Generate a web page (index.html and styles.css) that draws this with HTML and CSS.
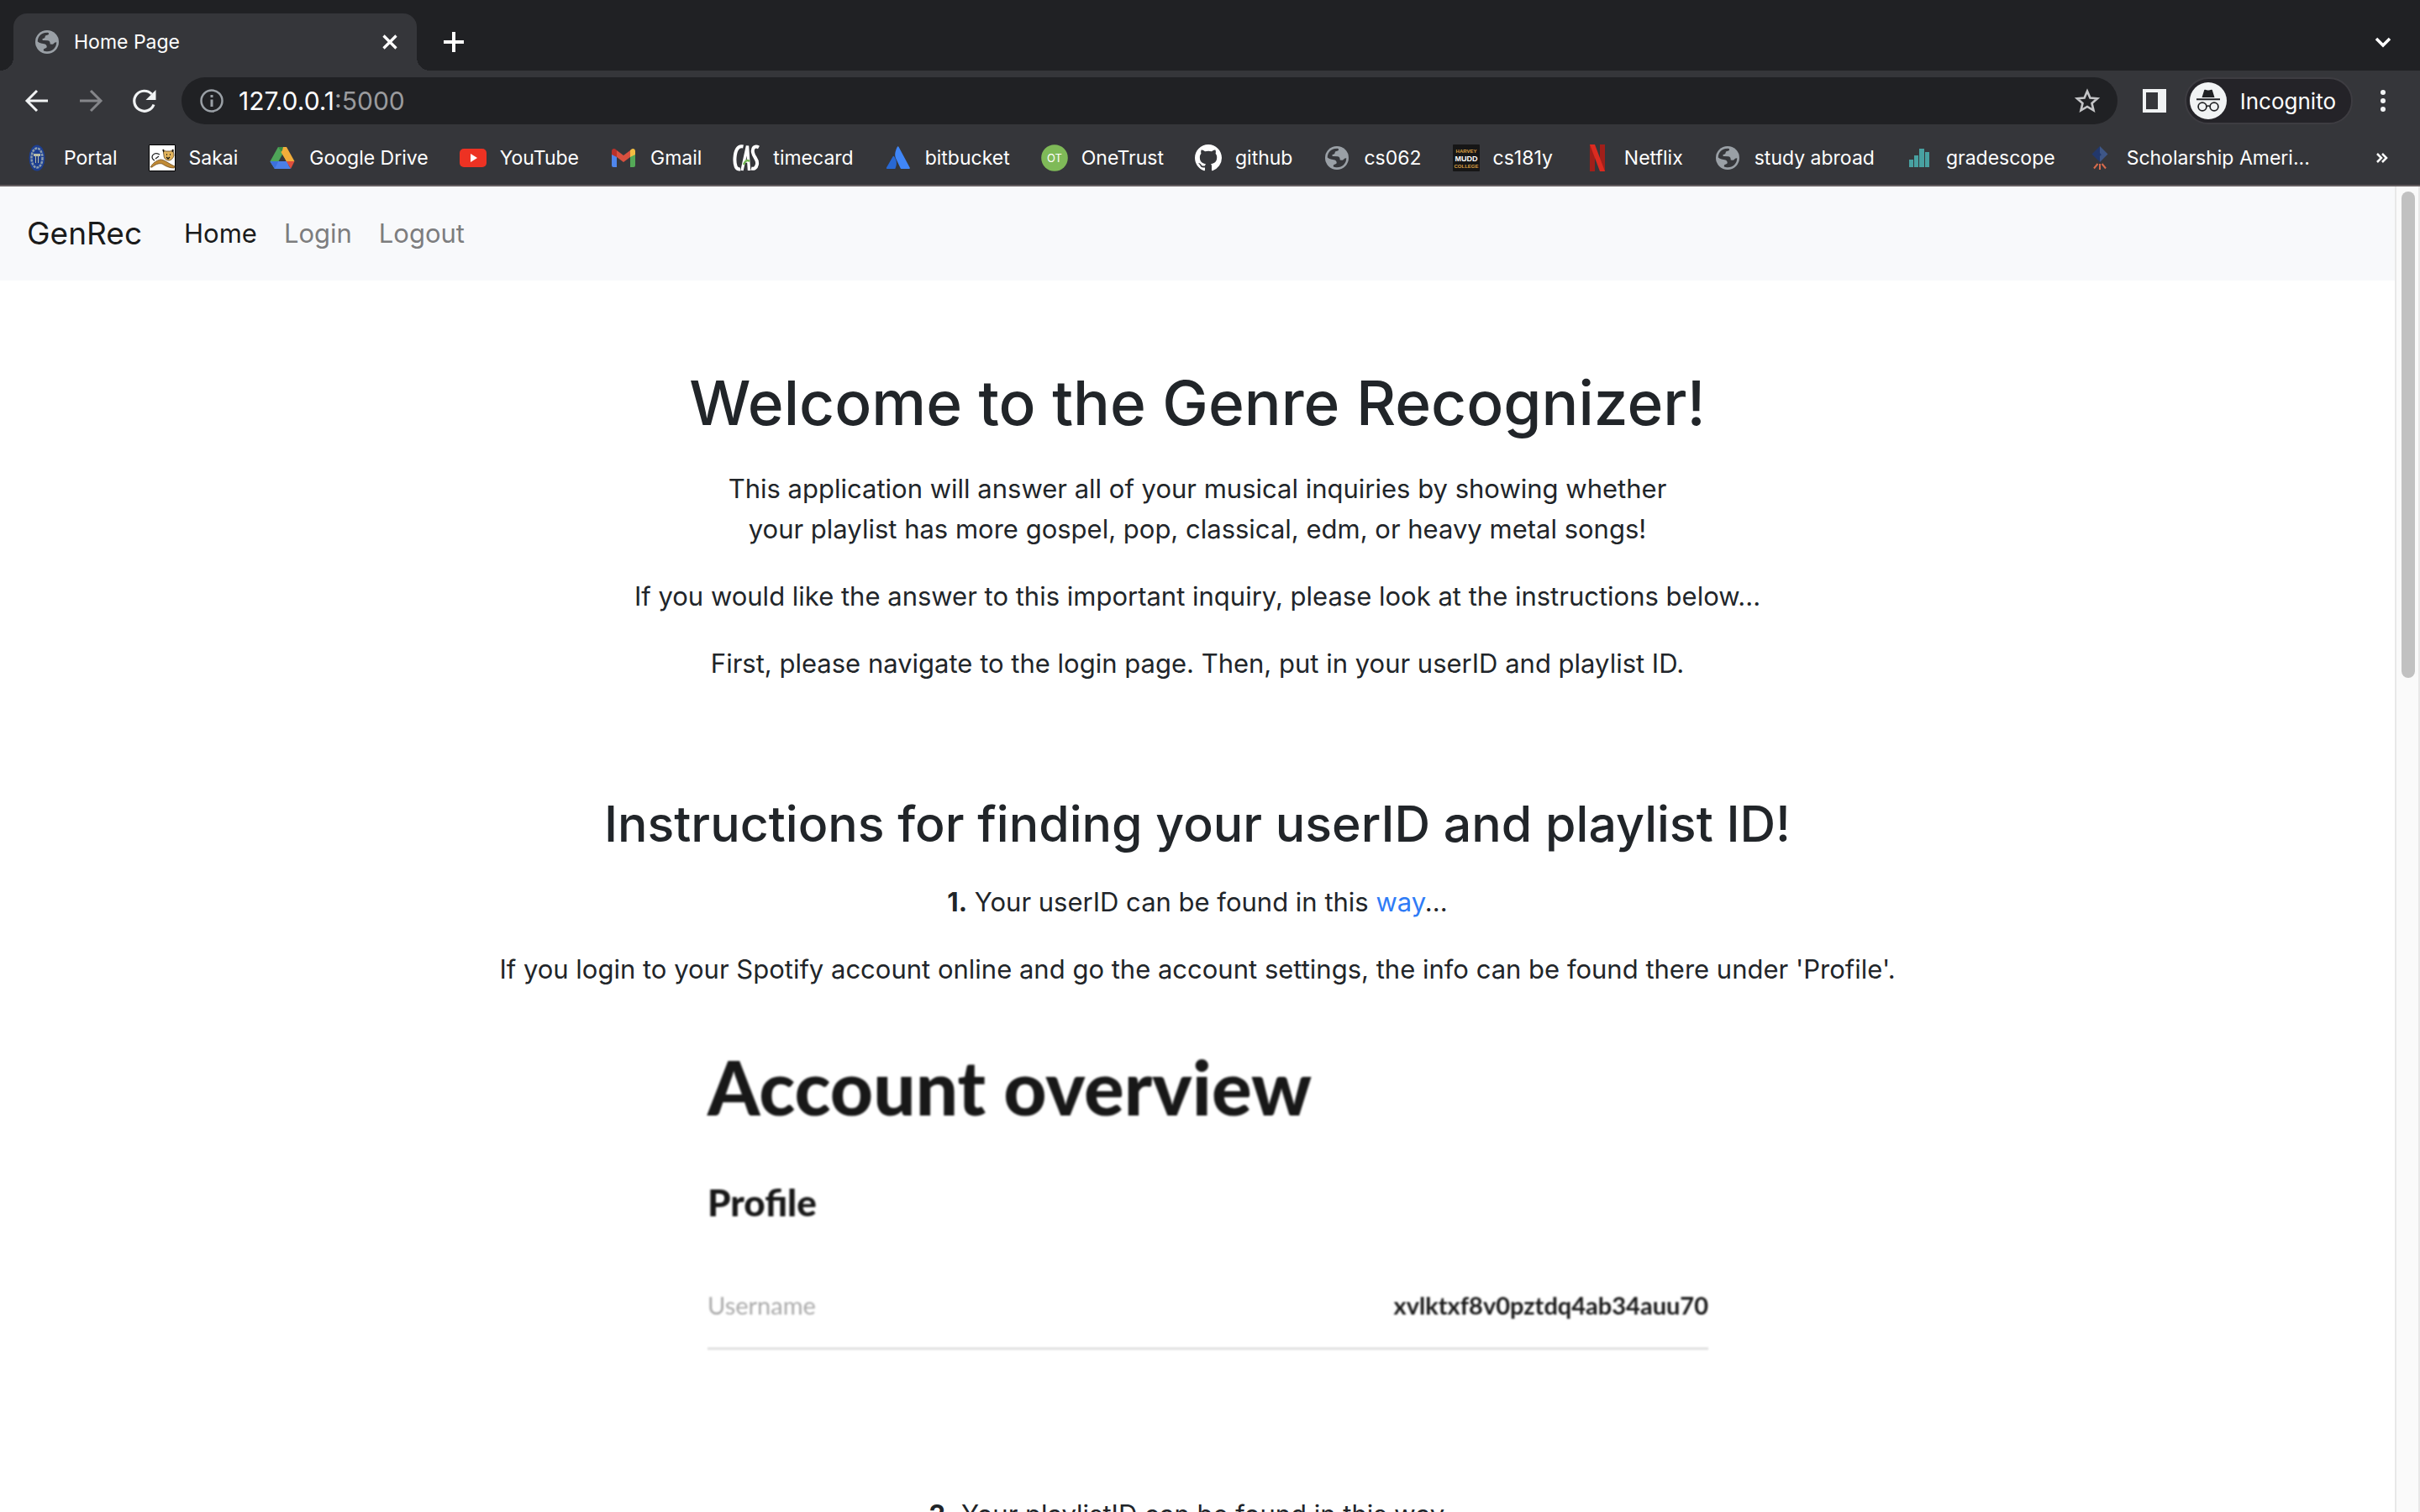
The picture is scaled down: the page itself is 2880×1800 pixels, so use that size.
FILE: index.html
```html
<!DOCTYPE html>
<html lang="en">
<head>
<meta charset="utf-8">
<title>Home Page</title>
<link rel="stylesheet" href="styles.css">
</head>
<body>
<svg width="0" height="0" class="defs" aria-hidden="true">
  <symbol id="globe" viewBox="0 0 32 32">
    <circle cx="16" cy="16" r="14" fill="#9aa0a6"/>
    <path fill="#35363a" d="M4.800 15.500C4.700 10 8.500 5.600 13.500 4.900L16.800 4.700C18.600 4.900 18.400 7 17 7.600L14.500 8.300C13.300 8.800 14 10.500 13 11.200L10.600 12.200C9.800 13.200 10.800 14 12 14.100L17 14.300C19.300 14.500 19.800 16.500 19.700 18.400L22.200 18.800C24 18.800 24.200 16.800 25.600 16.400L27.300 16.200C27.200 22.500 22.500 27.200 16.200 27.300C14.600 27.300 13 27 11.900 26.500L11.800 25C12 23.600 14.500 23.900 15.400 22.800C16.300 21.500 15.400 19.300 13.500 18.600C10.500 17.800 7 17.800 4.800 15.500Z"/>
  </symbol>
</svg>

<header class="browser">
  <div class="tabstrip">
    <div class="tab">
      <svg class="icon" aria-hidden="true"><use href="#globe"/></svg>
      <span class="tab-title">Home Page</span>
      <button class="icon-button" aria-label="Close tab"><svg class="icon" viewBox="0 0 32 32"><path d="M8.500 8.500l15 15M23.500 8.500l-15 15" stroke="#fff" stroke-width="3.200" fill="none"/></svg></button>
    </div>
    <button class="icon-button new-tab" aria-label="New tab"><svg class="icon" viewBox="0 0 32 32"><path d="M16 4v24M4 16h24" stroke="#fff" stroke-width="4" fill="none"/></svg></button>
    <button class="icon-button tab-search" aria-label="Search tabs"><svg class="icon" viewBox="0 0 32 32"><path d="M8 12l8 8 8-8" stroke="#fff" stroke-width="3.500" fill="none"/></svg></button>
  </div>

  <div class="toolbar">
    <button class="icon-button" aria-label="Back"><svg class="icon" viewBox="0 0 32 32"><path d="M29 16H5M16 4L4 16l12 12" stroke="#f1f3f4" stroke-width="3" fill="none"/></svg></button>
    <button class="icon-button" aria-label="Forward" disabled><svg class="icon" viewBox="0 0 32 32"><path d="M3 16h24M16 4l12 12-12 12" stroke="#85868a" stroke-width="3" fill="none"/></svg></button>
    <button class="icon-button" aria-label="Reload"><svg class="icon" viewBox="0 0 32 32"><path d="M27 20.500A12 12 0 1 1 24.500 8" stroke="#f1f3f4" stroke-width="3.200" fill="none"/><path d="M29.500 3v12h-12z" fill="#f1f3f4"/></svg></button>
    <div class="omnibox">
      <svg class="icon" viewBox="0 0 32 32" aria-hidden="true"><circle cx="16" cy="16" r="12.500" fill="none" stroke="#9aa0a6" stroke-width="2.500"/><path d="M16 14.500v8.500M16 9v3" stroke="#9aa0a6" stroke-width="3"/></svg>
      <span class="address">127.0.0.1<span class="port">:5000</span></span>
      <button class="icon-button" aria-label="Bookmark this tab"><svg class="icon" viewBox="0 0 32 32"><path d="M16 4.500l3.400 8 8.600.7-6.500 5.700 2 8.500L16 22.900l-7.500 4.500 2-8.500L4 13.200l8.600-.7z" stroke="#c4c5c7" stroke-width="2.600" fill="none"/></svg></button>
    </div>
    <button class="icon-button" aria-label="Side panel"><svg class="icon" viewBox="0 0 32 32"><path fill="#f1f3f4" fill-rule="evenodd" d="M2 2h28v28H2zM6 6v20h14V6z"/></svg></button>
    <button class="incognito">
      <svg class="avatar" viewBox="0 0 44 44" aria-hidden="true"><circle cx="22" cy="22" r="22" fill="#f1f3f4"/><path fill="#202124" d="M17.300 9c1.700-.8 3 .6 4.700.6S25 8.200 26.700 9L29.500 18h-15zM8 19.300h28v1.900H8z"/><g fill="none" stroke="#202124" stroke-width="1.700"><circle cx="15" cy="29" r="4.900"/><circle cx="29" cy="29" r="4.900"/><path d="M20 28.500q2-1 4 0"/></g></svg>
      <span>Incognito</span>
    </button>
    <button class="icon-button menu" aria-label="Menu"><svg class="icon" viewBox="0 0 32 32"><g fill="#f1f3f4"><circle cx="16" cy="6" r="3"/><circle cx="16" cy="16" r="3"/><circle cx="16" cy="26" r="3"/></g></svg></button>
  </div>

  <nav class="bookmarks" aria-label="Bookmarks">
    <a href="#"><svg class="icon" viewBox="0 0 32 32"><ellipse cx="16" cy="16" rx="9.500" ry="15.500" fill="#1d3f91"/><ellipse cx="16" cy="16" rx="6.500" ry="11.500" fill="none" stroke="#8b9cab" stroke-width="2.500" stroke-dasharray="3 1"/><path d="M12 11h8v3h-2v8h-4v-8h-2z" fill="#b9bea9"/><path d="M15 14h2v8h-2z" fill="#15327c"/></svg>Portal</a>
    <a href="#"><svg class="icon" viewBox="0 0 32 32"><path d="M.5.5h31v31H.5z" fill="#fff" stroke="#000"/><path d="M2 27c3-5 7-8 12-9 5 0 8 4 17 8l-1 2c-5 0-10-2-14-5-5-1-8 1-12 4z" fill="#c08a35" stroke="#6d4b1d" stroke-width=".8"/><path d="M17 6l3 2h6l3-2 1 7c-1 4-4 6-6 6-4 0-6-3-6-6z" fill="#e3b45b" stroke="#5a421f" stroke-width=".8"/><path d="M17 6l1 3M29 6l-1 3M21 12h1M25 12h1M21 15l2 2 2-2" stroke="#111" stroke-width="1.300" fill="none"/><path d="M7 19c-4-2-4-6 0-8 2-1 4 0 6 1M8 17l4-3" stroke="#222" stroke-width="1.200" fill="none"/></svg>Sakai</a>
    <a href="#"><svg class="icon" viewBox="0 0 32 32"><path fill="#4ea558" d="M11 3h5.500l4 8L7 29 1.500 20z"/><path fill="#388b45" d="M11 3h10l-4.600 8z"/><path fill="#f2ad3a" d="M21 3l9.500 17h-10L14.500 9 16 7 17 3z"/><path fill="#4b80e8" d="M7 20h18l-5 9H7l-5.500-8.500z"/><path fill="#dd4f3e" d="M20.500 20h10L26 29z"/><path fill="#35363a" d="M16 12l4.500 8h-9z"/><path fill="#3c70db" d="M1.500 20h10L7 29z"/><path fill="#4b80e8" d="M11.500 20h9L26 29H7z"/></svg>Google Drive</a>
    <a href="#"><svg class="icon" viewBox="0 0 32 32"><rect y="5" width="32" height="22" rx="5" fill="#ed3223"/><path d="M13 11l8 5-8 5z" fill="#fff"/></svg>YouTube</a>
    <a href="#"><svg class="icon" viewBox="0 0 32 32"><path fill="#4f86ec" d="M2 10l6 4v13H4a2 2 0 0 1-2-2z"/><path fill="#54a957" d="M24 14l6-4v15a2 2 0 0 1-2 2h-4z"/><path fill="#d8503f" d="M8 7l8 6 8-6v8l-8 6-8-6z"/><path fill="#b8312b" d="M2 12V8c0-3 3-4 5-2l1 1v8z"/><path fill="#f2bd42" d="M30 12V8c0-3-3-4-5-2l-1 1v8z"/></svg>Gmail</a>
    <a href="#"><svg class="icon" viewBox="0 0 32 32"><g fill="none" stroke="#fff" stroke-width="4"><path d="M12.500 2.500C6 1 3 7 2.500 16S4 30 9 29.500"/><path d="M11 31L17.500 1.500 19.500 31M13 20h7" stroke-width="3.400"/><path d="M31 3.500c-5-3-8 1-7 6 1 6 6 8 5 14-1 5-4 6-7 5"/></g><path d="M13 24c2-5 4-6 7-4" stroke="#71b552" stroke-width="2.500" fill="none"/></svg>timecard</a>
    <a href="#"><svg class="icon" viewBox="0 0 32 32"><path fill="#2868d3" d="M9.500 14.500c.5-1 1.400-1 1.800 0 3 4.500 3.500 9 1 14.500H3c-1 0-1.400-.6-1-1.500z"/><path fill="#4086f7" d="M14.800 3c.4-1 1.400-1 1.800 0L29.700 27.500c.4.900 0 1.500-1 1.500H20c-.8 0-1.200-.4-1.500-1L13.300 17c-2-4.500-1-9 1.500-14z"/></svg>bitbucket</a>
    <a href="#"><svg class="icon" viewBox="0 0 32 32"><circle cx="16" cy="16" r="15.800" fill="#7fba58"/><text x="16" y="21" text-anchor="middle" class="ot-text">OT</text></svg>OneTrust</a>
    <a href="#"><svg class="icon" viewBox="0 0 16 16"><path fill="#fff" d="M8 0C3.580 0 0 3.580 0 8c0 3.540 2.290 6.530 5.470 7.590.4.070.55-.17.55-.38 0-.19-.01-.82-.01-1.490-2.010.37-2.530-.49-2.690-.94-.09-.23-.48-.94-.82-1.130-.28-.15-.68-.52-.01-.53.63-.01 1.080.58 1.230.82.72 1.210 1.870.87 2.330.66.070-.52.28-.87.51-1.070-1.780-.2-3.640-.89-3.640-3.950 0-.87.31-1.590.82-2.150-.08-.2-.36-1.020.08-2.120 0 0 .67-.21 2.200.82.64-.18 1.320-.27 2-.27s1.360.09 2 .27c1.530-1.040 2.200-.82 2.200-.82.44 1.100.16 1.920.08 2.120.51.56.82 1.270.82 2.150 0 3.070-1.870 3.750-3.650 3.950.29.25.54.73.54 1.480 0 1.070-.01 1.930-.01 2.200 0 .21.15.46.55.38A8.010 8.010 0 0 0 16 8c0-4.420-3.580-8-8-8z"/></svg>github</a>
    <a href="#"><svg class="icon" aria-hidden="true"><use href="#globe"/></svg>cs062</a>
    <a href="#"><svg class="icon" viewBox="0 0 32 32"><rect width="32" height="32" rx="1" fill="#161616"/><g text-anchor="middle"><text x="16" y="10" fill="#dda043" class="hmc-small">HARVEY</text><text x="16" y="20" fill="#fff" class="hmc-large">MUDD</text><text x="16" y="28" fill="#dda043" class="hmc-small">COLLEGE</text></g></svg>cs181y</a>
    <a href="#"><svg class="icon" viewBox="0 0 32 32"><path fill="#a11f1a" d="M7 0h6v32H7zM19 0h6v32h-6z"/><path fill="#dc2b20" d="M7 0h6l12 32h-6z"/></svg>Netflix</a>
    <a href="#"><svg class="icon" aria-hidden="true"><use href="#globe"/></svg>study abroad</a>
    <a href="#"><svg class="icon" viewBox="0 0 32 32"><path fill="#48a1a1" d="M4 18h5v9H4zM10 13h5v14h-5zM16 5h6v22h-6zM23 9h5v18h-5z"/></svg>gradescope</a>
    <a href="#"><svg class="icon" viewBox="0 0 32 32"><path fill="#22386c" d="M16 2L6.500 11.500 16 21z"/><path fill="#3e5686" d="M16 2l9.500 9.500L16 21z"/><circle cx="16" cy="12" r="1.500" fill="#22386c"/><path stroke="#d66a4c" stroke-width="2" d="M13.500 23L9 28.500M16 23v7M18.500 23l4.500 5.500"/></svg>Scholarship Ameri...</a>
    <button class="icon-button overflow" aria-label="More bookmarks"><svg class="icon" viewBox="0 0 32 32"><path d="M9 11l5 5-5 5M15 11l5 5-5 5" stroke="#fff" stroke-width="2.500" fill="none"/></svg></button>
  </nav>
</header>

<div class="viewport">
  <div class="page">
    <nav class="navbar">
      <a class="brand" href="#">GenRec</a>
      <a class="nav-link active" href="#">Home</a>
      <a class="nav-link" href="#">Login</a>
      <a class="nav-link" href="#">Logout</a>
    </nav>
    <main>
      <section>
        <h1>Welcome to the Genre Recognizer!</h1>
        <p>This application will answer all of your musical inquiries by showing whether<br>your playlist has more gospel, pop, classical, edm, or heavy metal songs!</p>
        <p>If you would like the answer to this important inquiry, please look at the instructions below...</p>
        <p>First, please navigate to the login page. Then, put in your userID and playlist ID.</p>
      </section>
      <section>
        <h2>Instructions for finding your userID and playlist ID!</h2>
        <p><strong>1.</strong> Your userID can be found in this <a href="#">way</a>...</p>
        <p>If you login to your Spotify account online and go the account settings, the info can be found there under 'Profile'.</p>
        <figure class="account">
          <div class="account-title">Account overview</div>
          <div class="account-section">Profile</div>
          <div class="account-row"><span class="account-label">Username</span><span class="account-value">xvlktxf8v0pztdq4ab34auu70</span></div>
        </figure>
        <p><strong>2.</strong> Your playlistID can be found in this way...</p>
      </section>
    </main>
  </div>
  <div class="scrollbar"><div class="thumb"></div></div>
</div>
</body>
</html>
```
FILE: styles.css
```css
* { box-sizing: border-box; }

body {
  margin: 0;
  height: 100vh;
  display: flex;
  flex-direction: column;
  overflow: hidden;
  font-family: Inter, "Liberation Sans", sans-serif;
  background: #fff;
  color: #212529;
}

a { color: inherit; text-decoration: none; }
button { font: inherit; color: inherit; border: 0; padding: 0; background: none; }
.defs { position: absolute; }
.icon { display: block; width: 32px; height: 32px; flex: none; }
.icon-button { flex: none; }

/* Browser window */
.browser {
  flex: none;
  background: #35363a;
  color: #fff;
  font-size: 23px;
  border-bottom: 2px solid #655f61;
}

.tabstrip {
  display: flex;
  align-items: center;
  height: 84px;
  padding: 16px 28px 0 16px;
  background: #202124;
}

.tab {
  position: relative;
  display: flex;
  align-items: center;
  width: 480px;
  height: 68px;
  padding: 0 16px 0 24px;
  background: #35363a;
  border-radius: 16px 16px 0 0;
}

.tab::before,
.tab::after {
  content: "";
  position: absolute;
  bottom: 0;
  width: 16px;
  height: 16px;
}
.tab::before { right: 100%; background: radial-gradient(circle at 0 0, #202124 16px, #35363a 16px); }
.tab::after { left: 100%; background: radial-gradient(circle at 100% 0, #202124 16px, #35363a 16px); }
.tab-title { flex: 1; padding-left: 16px; }
.new-tab { margin-left: 28px; }
.tab-search { margin-left: auto; }

.toolbar {
  display: flex;
  align-items: center;
  gap: 32px;
  height: 72px;
  padding: 0 28px;
}

.omnibox {
  flex: 1;
  display: flex;
  align-items: center;
  gap: 16px;
  height: 56px;
  margin: 0 -4px;
  padding: 0 20px;
  border-radius: 28px;
  background: #202124;
  font-size: 30px;
}
.address { flex: 1; }
.port { color: #9a9b9e; }

.incognito {
  display: flex;
  align-items: center;
  gap: 16px;
  height: 56px;
  margin-left: -12px;
  padding: 0 18px 0 4px;
  border: 2px solid #3e3d42;
  border-radius: 28px;
  background: #242328;
  font-size: 26px;
}
.avatar { width: 44px; height: 44px; }
.menu { margin-left: -12px; }

.bookmarks {
  display: flex;
  align-items: center;
  gap: 37px;
  height: 64px;
  padding: 0 28px;
  white-space: nowrap;
}
.bookmarks a { display: flex; align-items: center; gap: 16px; }
.overflow { margin-left: auto; }
.ot-text { font: 13px Inter, sans-serif; fill: #fff; }
.hmc-small { font: bold 6px "Liberation Sans", sans-serif; }
.hmc-large { font: bold 9px "Liberation Sans", sans-serif; }

/* Web page */
.viewport { flex: 1; display: flex; min-height: 0; }
.page { flex: 1; overflow: hidden; font-size: 31px; line-height: 48px; }

.navbar {
  display: flex;
  align-items: center;
  gap: 32px;
  height: 112px;
  padding: 0 32px;
  background: #f8f9fb;
}
.brand { margin-right: 18px; font-size: 37px; color: #1a1b1b; }
.nav-link { color: #7d7d7e; }
.nav-link.active { color: #1a1b1b; }

main { padding-top: 98px; text-align: center; }
section { margin-bottom: 128px; }
h1, h2 { margin: 0 0 30px; font-weight: 500; }
h1 { font-size: 73px; line-height: 96px; }
h2 { font-size: 59px; line-height: 78px; }
p { margin: 0 0 32px; }
p a { color: #2f7cf6; }

.account {
  max-width: 1240px;
  margin: 0 auto 172px;
  padding: 32px 12px 0 37px;
  text-align: left;
  font-family: Lato, "Open Sans", sans-serif;
  color: #181818;
  filter: blur(1px);
}
.account-title { font-size: 89px; line-height: 104px; font-weight: 900; }
.account-section { margin-top: 60px; font-size: 44px; line-height: 50px; font-weight: 900; }
.account-row {
  display: flex;
  justify-content: space-between;
  margin-top: 58px;
  padding: 20px 0 30px;
  border-bottom: 3px solid #e0e0e0;
  font-size: 29px;
  line-height: 40px;
}
.account-label { color: #aaa; }
.account-value { font-weight: 700; }

.scrollbar {
  flex: none;
  width: 30px;
  padding: 6px;
  border: solid #e8e8e8;
  border-width: 0 2px;
  background: #fafafa;
}
.thumb { width: 16px; height: 37%; border-radius: 8px; background: #c1c1c1; }
```
